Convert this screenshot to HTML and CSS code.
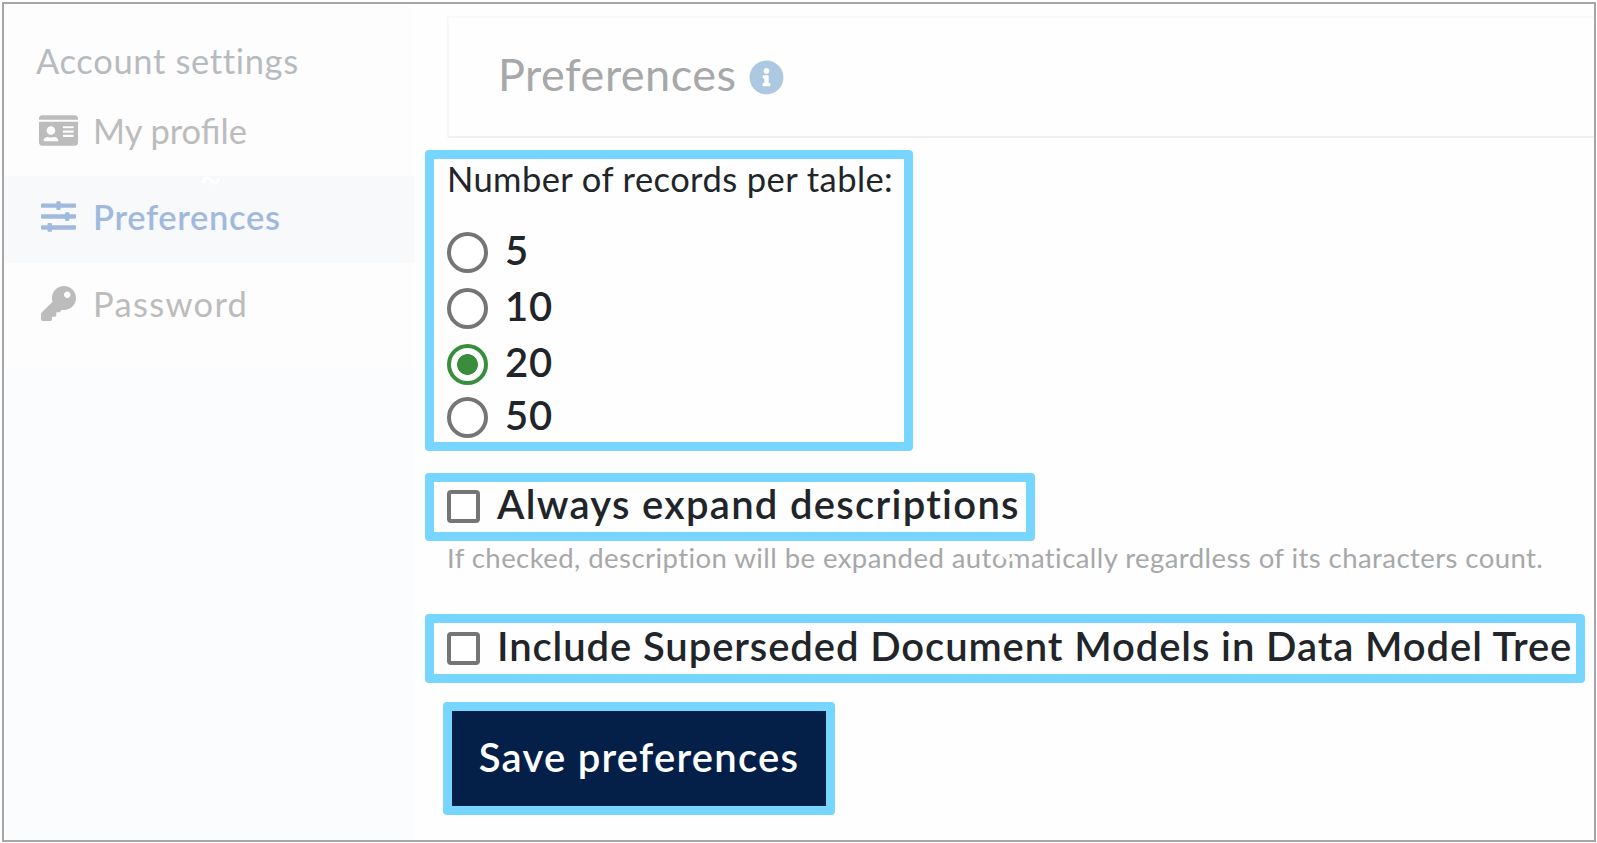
FILE: index.html
```html
<!DOCTYPE html>
<html lang="en">
<head>
<meta charset="utf-8">
<title>Preferences</title>
<link rel="stylesheet" href="styles.css">
</head>
<body>
<div class="frame">
  <aside class="sidebar">
    <nav class="menu">
      <h2 class="menu-title"><span class="t-account">Account settings</span></h2>
      <a class="item item-profile"><svg class="icon" viewBox="0 0 576 512"><path fill="currentColor" d="M528 32H48C21.500 32 0 53.500 0 80v16h576V80c0-26.500-21.500-48-48-48zM0 432c0 26.500 21.500 48 48 48h480c26.500 0 48-21.500 48-48V128H0v304zm352-232c0-4.400 3.600-8 8-8h144c4.400 0 8 3.600 8 8v16c0 4.400-3.600 8-8 8H360c-4.400 0-8-3.600-8-8v-16zm0 64c0-4.400 3.600-8 8-8h144c4.400 0 8 3.600 8 8v16c0 4.400-3.600 8-8 8H360c-4.400 0-8-3.600-8-8v-16zm0 64c0-4.400 3.600-8 8-8h144c4.400 0 8 3.600 8 8v16c0 4.400-3.600 8-8 8H360c-4.400 0-8-3.600-8-8v-16zM176 192c35.300 0 64 28.700 64 64s-28.700 64-64 64-64-28.700-64-64 28.700-64 64-64zM67.100 396.200C75.500 370.500 99.600 352 128 352h8.200c12.300 5.100 25.700 8 39.800 8s27.600-2.900 39.800-8h8.200c28.400 0 52.500 18.500 60.900 44.200 3.200 9.900-5.200 19.800-15.600 19.800H82.700c-10.400 0-18.800-10-15.600-19.800z"/></svg><span class="t-profile">My profile</span></a>
      <a class="item item-active"><svg class="icon icon-square" viewBox="0 0 512 512"><path fill="currentColor" d="M496 64H288V48c0-8.800-7.200-16-16-16h-32c-8.800 0-16 7.200-16 16v16H16C7.200 64 0 71.200 0 80v32c0 8.800 7.200 16 16 16h208v16c0 8.800 7.200 16 16 16h32c8.800 0 16-7.200 16-16v-16h208c8.800 0 16-7.200 16-16V80c0-8.800-7.200-16-16-16zm0 320H160v-16c0-8.800-7.200-16-16-16h-32c-8.800 0-16 7.200-16 16v16H16c-8.800 0-16 7.200-16 16v32c0 8.800 7.200 16 16 16h80v16c0 8.800 7.200 16 16 16h32c8.800 0 16-7.200 16-16v-16h336c8.800 0 16-7.200 16-16v-32c0-8.800-7.200-16-16-16zm0-160h-80v-16c0-8.800-7.200-16-16-16h-32c-8.800 0-16 7.200-16 16v16H16c-8.800 0-16 7.200-16 16v32c0 8.800 7.200 16 16 16h336v16c0 8.800 7.200 16 16 16h32c8.800 0 16-7.200 16-16v-16h80c8.800 0 16-7.200 16-16v-32c0-8.800-7.200-16-16-16z"/></svg><span class="t-prefs">Preferences</span><svg class="speck" viewBox="0 0 18 9"><path d="M1.500 7C2 1 6 1 9 4.500S16 8 16.500 2"/></svg></a>
      <a class="item item-password"><svg class="icon icon-square" viewBox="0 0 512 512"><path fill="currentColor" d="M512 176c0 97.200-78.800 176-176 176-11.200 0-22.200-1.100-32.800-3.100l-24 27A24 24 0 0 1 261.200 384H224v40c0 13.300-10.700 24-24 24h-40v40c0 13.300-10.700 24-24 24H24c-13.300 0-24-10.700-24-24v-78.100c0-6.400 2.500-12.500 7-17l161.800-161.800C163 214 160 195.400 160 176 160 78.800 238.800 0 336 0s176 78.500 176 176zM336 128c0 26.500 21.500 48 48 48s48-21.500 48-48-21.500-48-48-48-48 21.500-48 48z"/></svg><span class="t-password">Password</span></a>
    </nav>
  </aside>
  <main class="main">
    <header class="head">
      <h1 class="title">Preferences</h1>
      <svg class="info" viewBox="0 0 512 512"><path fill="currentColor" d="M256 8C119 8 8 119 8 256s111 248 248 248 248-111 248-248S393 8 256 8zm0 110c23.200 0 42 18.800 42 42s-18.800 42-42 42-42-18.800-42-42 18.800-42 42-42zm56 254c0 6.600-5.400 12-12 12h-88c-6.600 0-12-5.400-12-12v-24c0-6.600 5.400-12 12-12h12v-64h-12c-6.600 0-12-5.400-12-12v-24c0-6.600 5.400-12 12-12h64c6.600 0 12 5.400 12 12v100h12c6.600 0 12 5.400 12 12v24z"/></svg>
    </header>
    <section class="mark records">
      <p class="legend"><span>Number of records per table:</span></p>
      <label class="option"><i class="radio"></i><span>5</span></label>
      <label class="option"><i class="radio"></i><span>10</span></label>
      <label class="option"><i class="radio radio-on"></i><span>20</span></label>
      <label class="option option-last"><i class="radio"></i><span>50</span></label>
    </section>
    <label class="mark check check-expand"><i class="box"></i><span class="t-expand">Always expand descriptions</span></label>
    <p class="hint"><span>If checked, description will be expanded automatically regardless of its characters count.</span><svg class="speck speck-hint" viewBox="0 0 18 9"><path d="M1.500 7C2 1 6 1 9 4.500S16 8 16.500 2"/></svg></p>
    <label class="mark check check-include"><i class="box"></i><span class="t-include">Include Superseded Document Models in Data Model Tree</span></label>
    <button class="mark save"><span>Save preferences</span></button>
  </main>
</div>
</body>
</html>
```
FILE: styles.css
```css
* { box-sizing: border-box; }
body { margin: 0; padding: 2px 1px 1px 2px; width: 1597px; height: 843px; background: #fff; font-family: Lato, "Noto Sans", sans-serif; color: #212529; overflow: hidden; }
h1, h2, p { margin: 0; font-weight: 400; }
span, h1 { white-space: nowrap; }
.frame { display: flex; width: 1594px; height: 840px; border: 2px solid #a6a6a6; background: #fefefe; }
.sidebar { flex: none; width: 410px; background: #fbfcfe; }
.menu { height: 364px; background: #fdfdfd; display: flex; flex-direction: column; font-size: 34.500px; color: #bcbcbc; }
.menu-title { height: 84px; padding: 35px 0 0 32px; font-size: 34.500px; line-height: 44px; color: #b7bbbf; }
.t-account { letter-spacing: 0.650px; }
.t-prefs { letter-spacing: 0.650px; }
.t-password { letter-spacing: 1.300px; }
.item { position: relative; display: flex; align-items: center; height: 86px; padding: 0 0 6px 35px; gap: 15px; line-height: 44px; }
.item-profile { height: 89px; padding-bottom: 4px; }
.item span { margin-top: 1px; }
.item-active { margin-top: -1px; height: 87px; background: #f7f9fb; color: #a2b9de; font-weight: 600; }
.icon { width: 39px; height: 35px; }
.icon-square { width: 35px; height: 35px; margin: 0 2px; }
.speck { position: absolute; left: 198px; top: 0; width: 18px; height: 9px; fill: none; stroke: #fff; stroke-width: 3px; }
.main { flex: 1; min-width: 0; padding: 12px 0 0 11px; display: flex; flex-direction: column; align-items: flex-start; }
.head { display: flex; align-items: center; gap: 12px; align-self: stretch; height: 122px; margin-left: 22px; padding-left: 49px; border: 2px solid #f9f9f9; border-right: 0; border-bottom-color: #f0f0f0; }
.title { padding-bottom: 7px; font-size: 45px; line-height: 54px; letter-spacing: 0.5px; color: #a6a8a9; }
.info { width: 35px; height: 35px; color: #adc9e2; }
.mark { border: 9px solid #77d6ff; border-radius: 4px; }
.records { width: 488px; height: 301px; margin-top: 12px; padding-left: 13px; }
.legend { height: 65px; font-size: 34.500px; line-height: 39px; letter-spacing: 0.430px; }
.option { display: flex; align-items: center; gap: 17px; height: 56px; font-size: 40px; font-weight: 600; letter-spacing: 0.9px; }
.option span { padding-bottom: 4px; }
.option-last { height: 50px; }
.radio { width: 41px; height: 41px; border: 4px solid #757575; border-radius: 50%; background: #fff; }
.radio-on { border-color: #388e3c; background: radial-gradient(circle, #388e3c 10px, #fff 10.800px); }
.check { display: flex; align-items: center; gap: 17px; height: 69px; padding: 0 0 2px 13px; font-size: 40px; font-weight: 600; }
.check span { padding-bottom: 5px; }
.check-expand { width: 610px; height: 68px; margin-top: 22px; }
.check-include { width: 1160px; margin-top: 40px; padding-bottom: 1px; }
.t-expand { letter-spacing: 1.270px; }
.t-include { letter-spacing: 0.9px; }
.box { flex: none; width: 33px; height: 33px; border: 4px solid #757575; border-radius: 4px; background: #fff; }
.hint { position: relative; height: 33px; margin-left: 22px; font-size: 27.500px; line-height: 34px; letter-spacing: 0.440px; color: #a6a8a9; }
.speck-hint { left: 550px; top: 12px; }
.save { width: 392px; height: 113px; margin: 19px 0 0 18px; padding: 0 0 3px; background: #042048; color: #fff; font: 600 40px Lato, sans-serif; letter-spacing: 1.250px; }
```
